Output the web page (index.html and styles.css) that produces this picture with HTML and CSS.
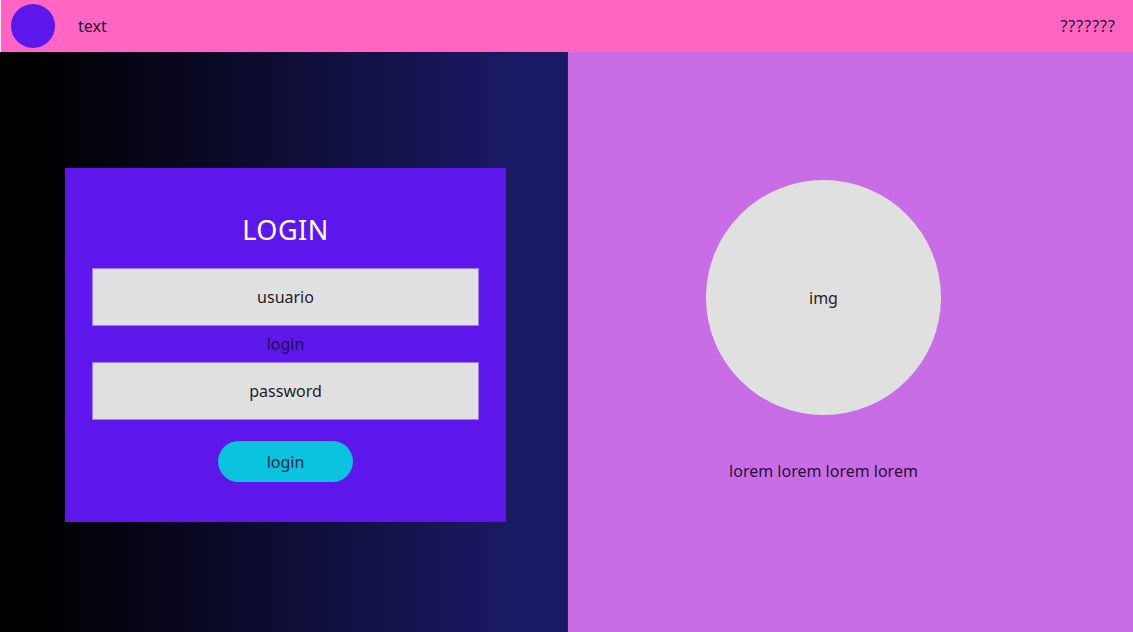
FILE: index.html
```html
<!DOCTYPE html>
<html lang="es">
<head>
<meta charset="utf-8">
<title>login</title>
<link rel="stylesheet" href="styles.css">
</head>
<body>
<header class="topbar">
  <div class="logo"></div>
  <span class="brand">text</span>
  <span class="menu">???????</span>
</header>
<main class="main">
  <section class="left">
    <form class="card">
      <h1 class="title">LOGIN</h1>
      <div class="field">usuario</div>
      <div class="label">login</div>
      <div class="field">password</div>
      <button type="button" class="btn">login</button>
    </form>
  </section>
  <section class="right">
    <div class="avatar">img</div>
    <p class="lorem">lorem lorem lorem lorem</p>
  </section>
</main>
</body>
</html>
```
FILE: styles.css
```css
* { box-sizing: border-box; }
html, body { margin: 0; padding: 0; }
body {
  width: 1133px;
  height: 632px;
  overflow: hidden;
  font-family: "Noto Sans", "Open Sans", sans-serif;
  color: #1b1433;
  display: flex;
  flex-direction: column;
}
.topbar {
  height: 52px;
  background: #ff66c4;
  display: flex;
  align-items: center;
  padding: 0 17px 0 10px;
  border-left: 1px solid #fbe3f0;
}
.logo {
  width: 44px;
  height: 44px;
  border-radius: 50%;
  background: #5e17eb;
}
.brand {
  margin-left: 23px;
  font-size: 16px;
}
.menu {
  margin-left: auto;
  font-size: 16px;
  letter-spacing: 1px;
}
.main {
  flex: 1;
  display: flex;
}
.left {
  width: 568px;
  background: linear-gradient(90deg, #000 7%, #1b1a67 92%);
  border-right: 1px solid #2a1f73;
  padding: 116px 62px 0 65px;
}
.card {
  width: 441px;
  height: 354px;
  background: #5e17eb;
  display: flex;
  flex-direction: column;
  align-items: center;
  padding-top: 44px;
}
.title {
  margin: 0;
  font-weight: 400;
  font-size: 27px;
  line-height: 36px;
  color: #fff;
  letter-spacing: 0.5px;
}
.field {
  margin-top: 20px;
  width: 387px;
  height: 58px;
  background: #e0e0e0;
  border: 1px solid #a07ae8;
  display: flex;
  align-items: center;
  justify-content: center;
  font-size: 16px;
  color: #1e1e2a;
}
.label + .field { margin-top: 0; }
.label {
  height: 36px;
  line-height: 36px;
  font-size: 16px;
  color: #1c0f4d;
}
.btn {
  margin-top: 21px;
  width: 135px;
  height: 41px;
  border: none;
  border-radius: 21px;
  background: #0bc2df;
  font-family: inherit;
  font-size: 16px;
  color: #0f2a4a;
}
.right {
  flex: 1;
  background: #c96de6;
  display: flex;
  flex-direction: column;
  align-items: center;
  padding: 128px 54px 0 0;
}
.avatar {
  width: 235px;
  height: 235px;
  border-radius: 50%;
  background: #e0e0e0;
  display: flex;
  align-items: center;
  justify-content: center;
  font-size: 16px;
  color: #1e1e2a;
}
.lorem {
  margin: 44px 0 0;
  font-size: 16px;
  line-height: 24px;
  color: #2a1038;
}
```
